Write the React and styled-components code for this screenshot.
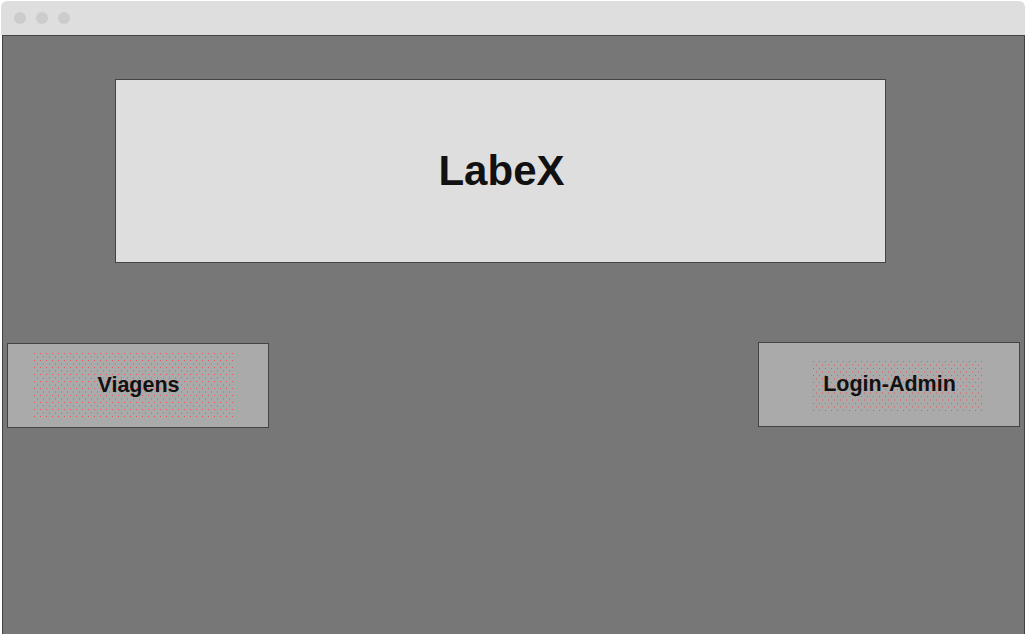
import React from "react";
import styled, { createGlobalStyle } from "styled-components";

const GlobalStyle = createGlobalStyle`
  html, body {
    margin: 0;
    padding: 0;
    background: #ffffff;
  }
  body {
    font-family: "Liberation Sans", Arial, sans-serif;
  }
`;

const Window = styled.div`
  margin: 1px 1px 0 1px;
  height: 633px;
  display: flex;
  flex-direction: column;
`;

const TitleBar = styled.div`
  height: 34px;
  flex: none;
  background: #dedede;
  border-radius: 6px 6px 0 0;
  display: flex;
  align-items: center;
  gap: 10px;
  padding-left: 13px;
`;

const Light = styled.span`
  width: 12px;
  height: 12px;
  border-radius: 50%;
  background: #cccccc;
`;

const Body = styled.main`
  flex: 1;
  margin-left: 1px;
  background: #777777;
  border: 1px solid #444444;
  border-bottom: none;
  display: flex;
  flex-direction: column;
`;

const Header = styled.header`
  margin: 43px 0 0 112px;
  width: 769px;
  height: 182px;
  background: #dedede;
  border: 1px solid #444444;
  display: flex;
  align-items: center;
  justify-content: center;
`;

const Title = styled.h1`
  margin: 0 0 0 2px;
  font-size: 42px;
  font-weight: 700;
  color: #111111;
`;

const ButtonRow = styled.nav`
  margin-top: 79px;
  display: flex;
  justify-content: space-between;
  align-items: flex-start;
  padding: 0 4px;
`;

const NavButton = styled.button`
  width: 262px;
  height: 85px;
  margin-top: ${props => props.offset}px;
  background: #aaaaaa;
  border: 1px solid #444444;
  padding: 0;
  display: flex;
  align-items: center;
  justify-content: center;
  font-family: "Liberation Sans", Arial, sans-serif;
  font-size: 21.5px;
  font-weight: 700;
  color: #111111;
  cursor: pointer;
`;

const Padding = styled.span`
  display: block;
  padding: ${props => props.pad};
  margin: ${props => props.lift}px 0 0 ${props => props.shift}px;
  line-height: 20px;
  background-color: transparent;
  background-image: radial-gradient(
      circle at 0.5px 0.5px,
      #f05050 0.9px,
      transparent 1px
    ),
    radial-gradient(circle at 0.5px 0.5px, #f05050 0.9px, transparent 1px);
  background-size: 6px 7px;
  background-position: 2px 2px, 5px 5.5px;
`;

export default function App() {
  return (
    <>
      <GlobalStyle />
      <Window>
        <TitleBar>
          <Light />
          <Light />
          <Light />
        </TitleBar>
        <Body>
          <Header>
            <Title>LabeX</Title>
          </Header>
          <ButtonRow>
            <NavButton offset={1}>
              <Padding pad="24px 55px 24px 65px" shift={-9} lift={-2}>
                Viagens
              </Padding>
            </NavButton>
            <NavButton offset={0}>
              <Padding pad="15px 26px 17px 12px" shift={15} lift={0}>
                Login-Admin
              </Padding>
            </NavButton>
          </ButtonRow>
        </Body>
      </Window>
    </>
  );
}
